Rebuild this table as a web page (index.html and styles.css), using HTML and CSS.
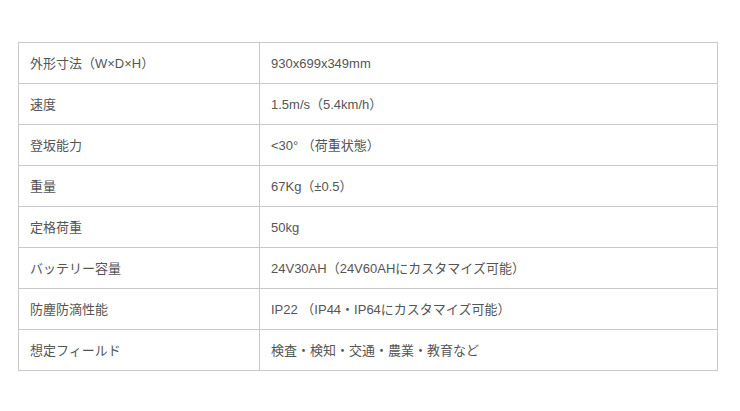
FILE: index.html
```html
<!DOCTYPE html>
<html lang="ja">
<head>
<meta charset="utf-8">
<link rel="stylesheet" href="styles.css">
</head>
<body>
<div class="wrap">
<table class="spec">
<tr><td class="k">外形寸法（W×D×H）</td><td class="v">930x699x349mm</td></tr>
<tr><td class="k">速度</td><td class="v">1.5m/s（5.4km/h）</td></tr>
<tr><td class="k">登坂能力</td><td class="v">&lt;30° （荷重状態）</td></tr>
<tr><td class="k">重量</td><td class="v">67Kg（±0.5）</td></tr>
<tr><td class="k">定格荷重</td><td class="v">50kg</td></tr>
<tr><td class="k">バッテリー容量</td><td class="v">24V30AH（24V60AHにカスタマイズ可能）</td></tr>
<tr><td class="k">防塵防滴性能</td><td class="v">IP22 （IP44・IP64にカスタマイズ可能）</td></tr>
<tr><td class="k">想定フィールド</td><td class="v">検査・検知・交通・農業・教育など</td></tr>
</table>
</div>
</body>
</html>
```
FILE: styles.css
```css
html, body {
  margin: 0;
  padding: 0;
  background: #fff;
}
.wrap {
  padding: 42px 0 0 18px;
}
.spec {
  border-collapse: collapse;
  width: 700px;
  font-family: "Liberation Sans", "Noto Sans CJK JP", sans-serif;
  font-size: 13px;
  color: #555;
}
.spec td {
  border: 1px solid #c9c9c9;
  height: 41px;
  padding: 0 11px;
  box-sizing: border-box;
  vertical-align: middle;
  line-height: 1;
}
.spec .k {
  width: 241px;
}
```
